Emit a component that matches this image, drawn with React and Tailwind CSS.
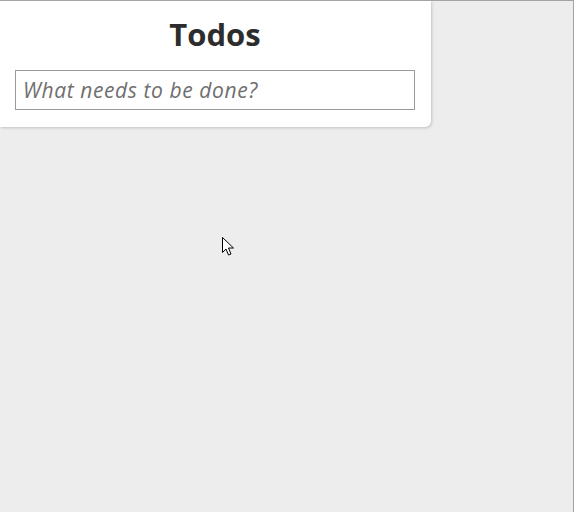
export default function App() {
  return (
    <div className="relative h-[512px] w-[574px] overflow-hidden border-t border-r border-[#a3a3a3] bg-[#ededed] font-['Open_Sans',sans-serif]">
      <div className="w-[431px] rounded-br-md bg-white pt-[11px] pb-[17px] pl-[15px] pr-[16px] shadow-[1px_1px_3px_rgba(0,0,0,0.18)]">
        <h1 className="text-center text-[31px] font-bold leading-[45px] text-[#2d2d2d]">Todos</h1>
        <input
          className="mt-[13px] block h-[40px] w-[400px] border border-[#9a9a9a] px-[7px] text-[21px] tracking-[0.6px] italic outline-none placeholder:text-[#6f6f6f]"
          placeholder="What needs to be done?"
        />
      </div>
      <svg className="absolute left-[222px] top-[236px]" width="13" height="20" viewBox="0 0 13 20">
        <path d="M0.5 0.5 L0.5 15.5 L4 12 L6.5 18 L9 17 L6.5 11 L11.5 11 Z" fill="#fff" stroke="#000" strokeWidth="1" strokeLinejoin="miter" />
      </svg>
    </div>
  );
}
